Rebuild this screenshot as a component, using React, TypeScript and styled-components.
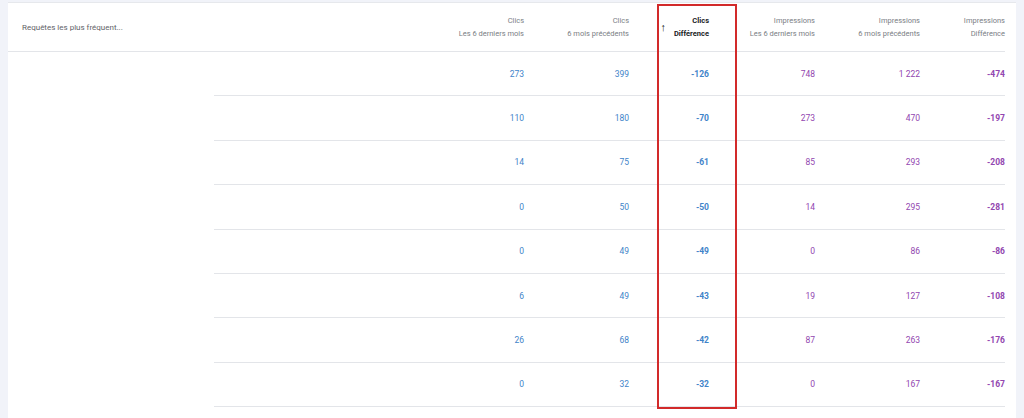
import styled, { createGlobalStyle } from 'styled-components'

const Global = createGlobalStyle`
  html, body { margin: 0; background: #f1f3f9; }
  body { font-family: Roboto, "Liberation Sans", sans-serif; }
`

const Card = styled.div`
  position: relative;
  margin: 0 8px;
  background: #fff;
  height: 418px;
  border-top: 1px solid #e6e8ec;
  margin-top: 2px;
  padding-right: 11px;
`

const COLS = '105px 105px 80px 106px 105px 85px'

const HeaderRow = styled.div`
  display: grid;
  grid-template-columns: 1fr ${COLS};
  height: 48px;
  border-bottom: 1px solid #e3e5e9;
  align-items: center;
`

const QueryHead = styled.div`
  padding-left: 14px;
  font-size: 8px;
  color: #5f6368;
`

const HeadCell = styled.div<{ active?: boolean }>`
  display: flex;
  justify-content: flex-end;
  align-items: center;
  gap: 8px;
  text-align: right;
  font-size: 7.5px;
  line-height: 13px;
  color: ${({ active }) => (active ? '#202124' : '#7a7e84')};
  font-weight: ${({ active }) => (active ? 700 : 400)};
`

const Arrow = styled.span`
  font-size: 11px;
  color: #202124;
  font-weight: 400;
`

const BodyRow = styled.div`
  display: flex;
  height: 44.4px;
`

const Spacer = styled.div`
  width: 206px;
  flex: none;
`

const Cells = styled.div`
  flex: 1;
  display: grid;
  grid-template-columns: 1fr ${COLS};
  align-items: center;
  border-bottom: 1px solid #e3e5e9;
`

const Num = styled.div<{ kind: 'clics' | 'imp'; bold?: boolean }>`
  text-align: right;
  font-size: 8.5px;
  color: ${({ kind }) => (kind === 'clics' ? '#3f84c9' : '#9246b0')};
  font-weight: ${({ bold }) => (bold ? 700 : 400)};
`

const Highlight = styled.div`
  position: absolute;
  left: 649px;
  top: 1px;
  width: 76px;
  height: 401px;
  border: 2px solid #d22a2a;
  pointer-events: none;
`

const rows = [
  [273, 399, -126, 748, '1 222', -474],
  [110, 180, -70, 273, 470, -197],
  [14, 75, -61, 85, 293, -208],
  [0, 50, -50, 14, 295, -281],
  [0, 49, -49, 0, 86, -86],
  [6, 49, -43, 19, 127, -108],
  [26, 68, -42, 87, 263, -176],
  [0, 32, -32, 0, 167, -167],
]

export default function App() {
  return (
    <>
      <Global />
      <Card>
        <HeaderRow>
          <QueryHead>Requêtes les plus fréquent...</QueryHead>
          <HeadCell><div>Clics<br />Les 6 derniers mois</div></HeadCell>
          <HeadCell><div>Clics<br />6 mois précédents</div></HeadCell>
          <HeadCell active><Arrow>↑</Arrow><div>Clics<br />Différence</div></HeadCell>
          <HeadCell><div>Impressions<br />Les 6 derniers mois</div></HeadCell>
          <HeadCell><div>Impressions<br />6 mois précédents</div></HeadCell>
          <HeadCell><div>Impressions<br />Différence</div></HeadCell>
        </HeaderRow>
        {rows.map((r, i) => (
          <BodyRow key={i}>
            <Spacer />
            <Cells>
              <div />
              <Num kind="clics">{r[0]}</Num>
              <Num kind="clics">{r[1]}</Num>
              <Num kind="clics" bold>{r[2]}</Num>
              <Num kind="imp">{r[3]}</Num>
              <Num kind="imp">{r[4]}</Num>
              <Num kind="imp" bold>{r[5]}</Num>
            </Cells>
          </BodyRow>
        ))}
        <Highlight />
      </Card>
    </>
  )
}
